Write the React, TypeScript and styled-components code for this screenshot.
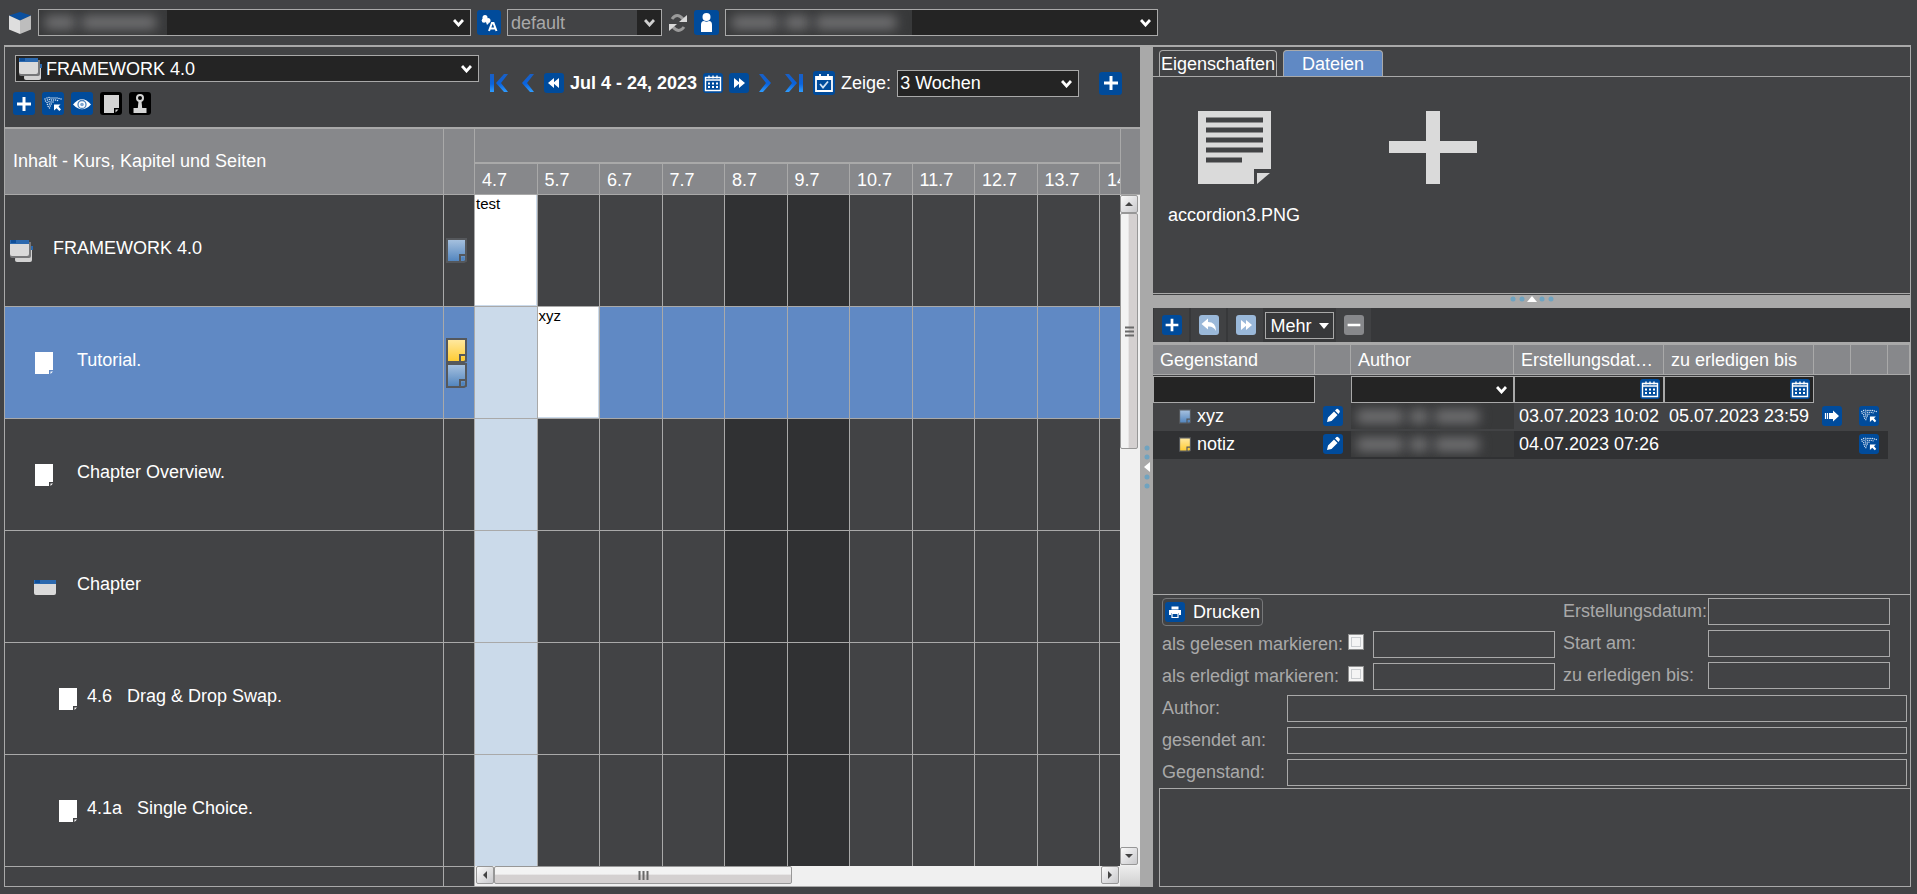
import React from "react";
import styled, { createGlobalStyle, css } from "styled-components";

const c = {
  bg: "#424345",
  dark: "#242424",
  line: "#a9a9a9",
  head: "#87888b",
  blue: "#004b9b",
  paleBlue: "#9ab8d9",
  select: "#6089c4",
  today: "#cbdaea",
  weekend: "#303133",
  text: "#ffffff",
  muted: "#a9a9a9",
};

const GlobalStyle = createGlobalStyle`
  * { box-sizing: border-box; }
  body {
    margin: 0;
    background: ${c.bg};
    color: ${c.text};
    font-family: "Liberation Sans", Arial, sans-serif;
    font-size: 18px;
    line-height: 20px;
  }
  button, input, select, textarea { font: inherit; color: inherit; margin: 0; }
  table { border-collapse: separate; border-spacing: 0; }
  th { font-weight: normal; text-align: left; }
  th, td { padding: 0; }
  svg { display: block; }
`;

/* ---------- icons ---------- */

type IconProps = { w?: number; h?: number };

const Svg = ({ w = 22, h = 22, box = "0 0 22 22", children }: IconProps & { box?: string; children: React.ReactNode }) => (
  <svg width={w} height={h} viewBox={box} aria-hidden="true">
    {children}
  </svg>
);

const CubeIcon = () => (
  <Svg w={24} h={24} box="0 0 24 24">
    <path d="M12 1 23 4.500 12 9.500 1 4.500z" fill="#0a4f9e" />
    <path d="M1 4.500 12 9.500V23L1 18.500z" fill="#dedede" />
    <path d="M23 4.500 12 9.500V23l11-4.500z" fill="#bdbdbd" />
  </Svg>
);

const PlusIcon = () => (
  <Svg>
    <path d="M11 4v14M4 11h14" stroke="#fff" strokeWidth="3" />
  </Svg>
);

const MinusIcon = () => (
  <Svg>
    <path d="M4 11h14" stroke="#fff" strokeWidth="3" />
  </Svg>
);

const netDots: [number, number][] = [
  [3, 6], [5, 5], [7, 4.5], [9, 5], [11, 5], [13, 5], [15, 5], [17, 5.5], [19, 6],
  [3.5, 8], [5.5, 7], [7.5, 6.5], [9.5, 7], [11.5, 7], [13.5, 7], [15.5, 7.5],
  [5, 9.5], [7, 8.8], [9, 9], [11, 9],
  [5.5, 11.5], [7.5, 11], [9.2, 11], [6.2, 13.5], [8.2, 13], [7.5, 15],
];

const NetIcon = () => (
  <Svg>
    {netDots.map(([x, y]) => (
      <circle key={`${x}-${y}`} cx={x} cy={y} r="0.75" fill="#d5e3f3" />
    ))}
    <path d="M12 11.500h6.500l-2 2 2.500 3-1.700 1.500-2.700-2.800-2.600 2.300z" fill="#fff" />
  </Svg>
);

const EyeIcon = () => (
  <Svg>
    <path d="M2 11.500Q11 1 20 11.500 11 21 2 11.500z" fill="#fff" />
    <circle cx="11" cy="11.500" r="4" fill="#fff" stroke="#4d83bd" strokeWidth="1.300" />
    <circle cx="11" cy="11.500" r="1.800" fill="#7ea5d0" />
  </Svg>
);

const NoteIcon = () => (
  <Svg>
    <path d="M4 2h15v13h-5v5H4z" fill="#d4d4d4" />
    <path d="M15.500 16.500h3l-3 3z" fill="#d4d4d4" />
  </Svg>
);

const StampIcon = () => (
  <Svg>
    <circle cx="11" cy="5" r="3" fill="none" stroke="#d4d4d4" strokeWidth="2" />
    <path d="M9.500 8h3l.7 7h4.300v5h-13v-5h4.300z" fill="#d4d4d4" />
  </Svg>
);

const TranslateIcon = () => (
  <Svg w={24} h={24} box="0 0 24 24">
    <circle cx="8" cy="6.500" r="2.500" fill="#fff" />
    <circle cx="7" cy="9.500" r="2.300" fill="#fff" />
    <circle cx="11" cy="9.500" r="2.500" fill="#fff" />
    <path d="M9 11l3 1-2 2z" fill="#fff" />
    <path d="M12 20 15 12h1.500l3 8M13 17.500h5" fill="none" stroke="#fff" strokeWidth="2" />
  </Svg>
);

const RefreshIcon = () => (
  <Svg w={20} h={22} box="1 0 20 22">
    <path d="M5 7q5-7 11 0" fill="none" stroke="#9a9a9a" strokeWidth="3" />
    <path d="M12 10h8V3z" fill="#d9d9d9" />
    <path d="M17 15q-5 7-11 0" fill="none" stroke="#9a9a9a" strokeWidth="3" />
    <path d="M10 12H2v7z" fill="#d9d9d9" />
  </Svg>
);

const UserIcon = () => (
  <Svg w={25} h={25} box="0 0 25 25">
    <circle cx="12.500" cy="7" r="4" fill="#fff" />
    <path d="M7 22v-7q0-4 3-4 2.500 1.500 5 0 3 0 3 4v7z" fill="#fff" />
  </Svg>
);

const ChevGradient = ({ id }: { id: string }) => (
  <linearGradient id={id} x1="0" y1="0" x2="0" y2="1">
    <stop offset="0" stopColor="#1a5fc4" />
    <stop offset="0.55" stopColor="#0a63dd" />
    <stop offset="1" stopColor="#2f9dff" />
  </linearGradient>
);

const FirstIcon = () => (
  <Svg w={18} h={20} box="0 0 18 20">
    <ChevGradient id="first" />
    <path d="M0 1h4v18H0zM14 1h4l-7 9 7 9h-4L6 10z" fill="url(#first)" />
  </Svg>
);
const PrevIcon = () => (
  <Svg w={12} h={20} box="0 0 12 20">
    <ChevGradient id="prev" />
    <path d="M8 1h4L5 10l7 9H8L0 10z" fill="url(#prev)" />
  </Svg>
);
const NextIcon = () => (
  <Svg w={12} h={20} box="0 0 12 20">
    <ChevGradient id="next" />
    <path d="M4 1H0l7 9-7 9h4l8-9z" fill="url(#next)" />
  </Svg>
);
const LastIcon = () => (
  <Svg w={18} h={20} box="0 0 18 20">
    <ChevGradient id="last" />
    <path d="M14 1h4v18h-4zM4 1H0l7 9-7 9h4l8-9z" fill="url(#last)" />
  </Svg>
);

const RewindIcon = () => (
  <Svg w={20} h={20} box="0 0 20 20">
    <path d="M10 5v10l-6-5zM15 5v10l-6-5z" fill="#fff" />
  </Svg>
);
const ForwardIcon = () => (
  <Svg w={20} h={20} box="0 0 20 20">
    <path d="M5 5v10l6-5zM10 5v10l6-5z" fill="#fff" />
  </Svg>
);
const CalendarIcon = () => (
  <Svg w={20} h={20} box="0 0 20 20">
    <path d="M2.500 4.500h15v13h-15zM2 7h16M6 2.500v3M10 2.500v3M14 2.500v3" fill="none" stroke="#fff" strokeWidth="1.400" />
    <path d="M5 10.500h10M5 14h10" stroke="#fff" strokeWidth="2" strokeDasharray="2 2" />
  </Svg>
);
const CalendarCheckIcon = () => (
  <Svg w={22} h={24} box="0 0 22 24">
    <path d="M3 6h16v14H3zM3 8h16M7 3v4M15 3v4" fill="none" stroke="#fff" strokeWidth="1.800" />
    <path d="M7 13l3 3.500 5-6" fill="none" stroke="#cfe0f2" strokeWidth="1.800" />
  </Svg>
);
const UndoIcon = () => (
  <Svg w={20} h={20} box="0 0 20 20">
    <path d="M2.500 9 9 3.500V7q8 0 8 9-2.500-5-8-4.500v3z" fill="#fff" />
  </Svg>
);
const PencilIcon = () => (
  <Svg w={20} h={20} box="0 0 20 20">
    <path d="M4 16l1-4.500L11 5.500 14.500 9l-6 6zM12 4.500 13.500 3q1-.5 2 .5l1 1q.8 1 0 2L15.500 8z" fill="#fff" />
  </Svg>
);
const SendIcon = () => (
  <Svg w={20} h={20} box="0 0 20 20">
    <path d="M3.500 7v6M5.500 7v6" stroke="#fff" strokeWidth="1.200" />
    <path d="M7 7h4V4.500L17 10l-6 5.500V13H7z" fill="#fff" />
  </Svg>
);
const PrintIcon = () => (
  <Svg w={20} h={20} box="0 0 20 20">
    <path d="M6.500 4.500h7v3h-7zM4 8h12v5h-2v-2H6v2H4z" fill="#fff" />
    <path d="M7 11.500h6v4H7z" fill="none" stroke="#fff" strokeWidth="1.200" />
  </Svg>
);

const CourseIcon = () => (
  <Svg w={24} h={24} box="0 0 24 24">
    <path d="M6 9h16v12q0 2-2 2H7q-2 0-2-2z" fill="#d2d2d2" />
    <path d="M20 7h3v4h-3z" fill="#2c69ae" />
    <path d="M0 3h21v14q0 2-2 2H2q-2 0-2-2z" fill="#77787a" />
    <path d="M0 3h19v12q0 2-2 2H2q-2 0-2-2z" fill="#dadada" />
    <path d="M0 1h19v4H0z" fill="#2c69ae" />
    <path d="M1 1h5v3H1z" fill="#0f4f99" />
  </Svg>
);
const ChapterIcon = () => (
  <Svg w={22} h={24} box="0 0 22 24">
    <path d="M0 8h22v10q0 2-2 2H2q-2 0-2-2z" fill="#dadada" />
    <path d="M0 5h22v4H0z" fill="#2c69ae" />
    <path d="M1 5h5v3H1z" fill="#0f4f99" />
  </Svg>
);
const PageIcon = () => (
  <Svg w={20} h={24} box="0 0 20 24">
    <path d="M1 1h18v18h-4v4H1z" fill="#fff" />
    <path d="M16.500 20.500H19L16.500 23z" fill="#fff" />
  </Svg>
);

const StickyIcon = ({ tone, w = 21, h = 25 }: IconProps & { tone: "blue" | "yellow" }) => {
  const [top, bottom] = tone === "blue" ? ["#a9c3e0", "#4f83bd"] : ["#ffe9a3", "#ffcb2f"];
  const id = `sticky-${tone}`;
  return (
    <Svg w={w} h={h} box="0 0 21 25">
      <linearGradient id={id} x1="0" y1="0" x2="0" y2="1">
        <stop offset="0" stopColor={top} />
        <stop offset="1" stopColor={bottom} />
      </linearGradient>
      <path d="M1 1h19v22l-2 1H1z" fill={`url(#${id})`} stroke="#55585c" strokeWidth="2" />
      <path d="M20 17h-6v7" fill="none" stroke="#55585c" strokeWidth="2" />
      <circle cx="17" cy="20.500" r="1.500" fill={bottom} />
    </Svg>
  );
};

const DocumentIcon = () => (
  <Svg w={73} h={73} box="0 0 73 73">
    <path d="M0 0h73v58H56v15H0z" fill="#dadada" />
    <path d="M59 62h13L59 73z" fill="#dadada" />
    <path d="M8 9h57M8 19h57M8 29h57M8 39h57M8 49h36" stroke={c.bg} strokeWidth="5" />
  </Svg>
);
const BigPlusIcon = () => (
  <Svg w={88} h={73} box="0 0 88 73">
    <path d="M37 0h14v30h37v12H51v31H37V42H0V30h37z" fill="#dadada" />
  </Svg>
);

/* ---------- shared controls ---------- */

const IconButton = styled.button<{ $w?: number; $h?: number; $tone?: string }>`
  flex: none;
  display: flex;
  align-items: center;
  justify-content: center;
  width: ${(p) => p.$w ?? 20}px;
  height: ${(p) => p.$h ?? 20}px;
  padding: 0;
  border: 0;
  border-radius: 3px;
  background: ${(p) => p.$tone ?? c.blue};
  overflow: hidden;
`;

const ChevronButton = styled.button`
  flex: none;
  margin: 0 4px;
  padding: 0;
  border: 0;
  background: none;
`;

const SelectBox = styled.div<{ $w?: number }>`
  position: relative;
  flex: none;
  width: ${(p) => (p.$w ? `${p.$w}px` : "100%")};
  height: 27px;
`;

const NativeSelect = styled.select<{ $pad?: number; $muted?: boolean }>`
  appearance: none;
  display: block;
  width: 100%;
  height: 100%;
  padding: 0 24px 0 ${(p) => p.$pad ?? 2}px;
  border: 1px solid ${c.line};
  border-radius: 0;
  background: ${(p) => (p.$muted ? `linear-gradient(${c.dark}, ${c.dark}) right / 24px 100% no-repeat ${c.bg}` : c.dark)};
  color: ${(p) => (p.$muted ? c.muted : c.text)};
  line-height: 20px;
`;

const SelectArrow = styled.span`
  position: absolute;
  right: 7px;
  top: 10px;
  pointer-events: none;
`;

const SelectLead = styled.span`
  position: absolute;
  left: 4px;
  top: 2px;
  pointer-events: none;
`;

const Smudge = styled.span<{ $w: number; $h: number }>`
  display: flex;
  align-items: center;
  gap: 7px;
  width: ${(p) => p.$w}px;
  height: ${(p) => p.$h}px;
  padding: 0 6px;
  background: #38393a;
  overflow: hidden;
`;

const SmudgeWord = styled.i<{ $w: number }>`
  width: ${(p) => p.$w}px;
  height: 13px;
  background: #737375;
  filter: blur(6px);
`;

const SelectCover = styled.span`
  position: absolute;
  left: 1px;
  top: 1px;
  pointer-events: none;
`;

type DropProps = {
  label: string;
  value: string;
  w?: number;
  pad?: number;
  muted?: boolean;
  lead?: React.ReactNode;
  cover?: React.ReactNode;
  id?: string;
};

const Drop = ({ label, value, w, pad, muted, lead, cover, id }: DropProps) => (
  <SelectBox $w={w}>
    <NativeSelect aria-label={label} id={id} $pad={pad} $muted={muted} defaultValue={value}>
      <option value={value}>{value}</option>
    </NativeSelect>
    {lead && <SelectLead>{lead}</SelectLead>}
    {cover && <SelectCover>{cover}</SelectCover>}
    <SelectArrow>
      <Svg w={11} h={8} box="0 0 11 8">
        <path d="M1 1l4.500 5L10 1" fill="none" stroke={muted ? "#cfcfcf" : "#fff"} strokeWidth="2.800" />
      </Svg>
    </SelectArrow>
  </SelectBox>
);

/* ---------- page frame ---------- */

const Shell = styled.div`
  display: flex;
  flex-direction: column;
  height: 100vh;
  min-height: 700px;
  padding: 0 6px 7px 4px;
`;

const TopBar = styled.header`
  flex: none;
  display: flex;
  align-items: center;
  gap: 6px;
  height: 45px;
  padding-left: 4px;
`;

const Workspace = styled.main`
  flex: 1;
  min-height: 0;
  display: grid;
  grid-template-columns: minmax(0, 3fr) 12px minmax(0, 2fr);
  grid-template-rows: minmax(0, 1fr);
  border-top: 2px solid ${c.line};
`;

const Planner = styled.section`
  display: flex;
  flex-direction: column;
  min-height: 0;
  border: 1px solid ${c.line};
  border-top: 0;
`;

const PlannerTools = styled.div`
  flex: none;
  display: flex;
  height: 80px;
  padding: 8px 10px 0;
`;

const CourseTools = styled.div`
  flex: none;
  width: 464px;
`;

const ButtonRow = styled.div`
  display: flex;
  gap: 7px;
  margin: 10px 0 0 -2px;
`;

const DateNav = styled.nav`
  display: flex;
  align-items: center;
  gap: 6px;
  height: 56px;
  margin-left: 7px;
  white-space: nowrap;
`;

const AddSlot = styled.div`
  margin-left: 14px;
`;

const Board = styled.div`
  flex: 1;
  min-height: 0;
  display: flex;
  border-top: 2px solid ${c.line};
`;

const Tree = styled.div`
  flex: none;
  width: 470px;
  overflow: hidden;
`;

const TreeTable = styled.table`
  width: 100%;
  table-layout: fixed;
`;

const NoteCol = styled.col`
  width: 31px;
`;

const TreeHead = styled.th`
  height: 66px;
  padding: 0 0 2px 8px;
  background: ${c.head};
  border-right: 1px solid ${c.line};
  border-bottom: 1px solid ${c.line};
`;

const rowHeight = css`
  height: 112px;
  border-right: 1px solid ${c.line};
  border-bottom: 1px solid ${c.line};
`;

const TreeCell = styled.td<{ $on?: boolean; $level?: number }>`
  ${rowHeight}
  padding-left: ${(p) => 5 + 24 * (p.$level ?? 0)}px;
  background: ${(p) => (p.$on ? c.select : "transparent")};
`;

const TreeItem = styled.div`
  display: flex;
  align-items: center;
`;

const TreeIcon = styled.span<{ $w: number }>`
  flex: none;
  width: ${(p) => p.$w}px;
`;

const TreeText = styled.span`
  padding-bottom: 6px;
  white-space: pre;
`;

const NoteCell = styled(TreeCell)`
  padding-left: 2px;
`;

const Timeline = styled.div`
  flex: 1;
  min-width: 0;
  display: flex;
  flex-direction: column;
`;

const DaysView = styled.div`
  flex: 1;
  min-height: 0;
  overflow: hidden;
`;

const DaysTable = styled.table`
  width: 100%;
  table-layout: fixed;
`;

const LastDayCol = styled.col`
  width: 20px;
`;

const MonthHead = styled.th`
  height: 35px;
  background: ${c.head};
  border-bottom: 2px solid ${c.line};
`;

const DayHead = styled.th`
  height: 31px;
  padding: 2px 0 0 7px;
  background: ${c.head};
  border-right: 1px solid ${c.line};
  border-bottom: 1px solid ${c.line};
  overflow: hidden;
  white-space: nowrap;
  &:last-child { border-right: 0; }
`;

const DayCell = styled.td<{ $bg: string }>`
  ${rowHeight}
  background: ${(p) => p.$bg};
  vertical-align: top;
  &:last-child { border-right: 0; }
`;

const Event = styled.div`
  height: 111px;
  border: 1px solid ${c.today};
  border-width: 0 1px 1px 0;
  background: #fff;
  color: #000;
  font-size: 15px;
  line-height: 18px;
  padding-left: 1px;
`;

/* ---------- scroll bars ---------- */

const bevel = css`
  border: 1px solid #979797;
  border-radius: 2px;
  display: flex;
  align-items: center;
  justify-content: center;
`;

const HBar = styled.div`
  flex: none;
  display: flex;
  height: 20px;
  padding: 0 1px 2px;
  background: #f0f0f0;
`;

const HThumb = styled.div`
  ${bevel}
  width: 298px;
  background: linear-gradient(#f3f3f3 0 45%, #d4d0d0 50% 100%);
`;

const VRail = styled.div`
  flex: none;
  display: flex;
  flex-direction: column;
  width: 20px;
  background: #f0f0f0;
`;

const VCorner = styled.div`
  flex: none;
  height: 66px;
  background: ${c.head};
  border: 1px solid ${c.line};
  border-width: 0 0 1px 1px;
`;

const VBar = styled.div`
  flex: 1;
  display: flex;
  flex-direction: column;
  padding: 0 2px 1px 0;
`;

const VThumb = styled.div`
  ${bevel}
  height: 236px;
  background: linear-gradient(90deg, #f3f3f3 0 45%, #d4d0d0 50% 100%);
`;

const VEnd = styled.div`
  flex: none;
  height: 20px;
  background: linear-gradient(#ededed, #cfcfcf);
`;

const Arrow = styled.button`
  ${bevel}
  flex: none;
  width: 18px;
  height: 18px;
  padding: 0;
  background: linear-gradient(135deg, #fafafa, #c9c9cc);
`;

const Filler = styled.span`
  flex: 1;
`;

const Grip = ({ vertical }: { vertical?: boolean }) => (
  <Svg w={11} h={11} box="0 0 11 11">
    <path
      d={vertical ? "M1 1.500h9M1 5.500h9M1 9.500h9" : "M1.500 1v9M5.500 1v9M9.500 1v9"}
      stroke="#6a6a6a"
      strokeWidth="2"
    />
  </Svg>
);

const Tip = ({ d }: { d: string }) => (
  <Svg w={8} h={8} box="0 0 8 8">
    <path d={d} fill="#444" />
  </Svg>
);

/* ---------- splitters ---------- */

const Splitter = styled.div<{ $row?: boolean }>`
  flex: none;
  display: flex;
  align-items: ${(p) => (p.$row ? "flex-start" : "center")};
  justify-content: center;
  background: ${c.line};
  height: ${(p) => (p.$row ? "13px" : "auto")};
`;

const Handle = ({ row }: { row?: boolean }) => (
  <Svg w={row ? 44 : 8} h={row ? 8 : 44} box={row ? "0 0 44 8" : "0 0 8 44"}>
    {[3, 12, 32, 41].map((n) => (
      <circle key={n} cx={row ? n : 4} cy={row ? 4 : n} r="2.500" fill="#6fa3c0" />
    ))}
    <path d={row ? "M17 7l5-6 5 6z" : "M7 17l-6 5 6 5z"} fill="#fff" />
  </Svg>
);

/* ---------- right side ---------- */

const Side = styled.section`
  display: flex;
  flex-direction: column;
  min-height: 0;
`;

const FilesPane = styled.div`
  flex: none;
  display: flex;
  flex-direction: column;
  height: 248px;
  border-right: 1px solid ${c.line};
`;

const Tabs = styled.div`
  display: flex;
  align-items: flex-end;
  gap: 6px;
  height: 30px;
  padding: 3px 6px 0;
  border-bottom: 1px solid ${c.line};
`;

const Tab = styled.button<{ $on?: boolean; $w: number }>`
  width: ${(p) => p.$w}px;
  height: 26px;
  padding: 0;
  border: 1px solid ${c.line};
  border-bottom: 0;
  border-radius: 4px 4px 0 0;
  background: ${(p) => (p.$on ? c.select : "transparent")};
  white-space: nowrap;
`;

const Files = styled.div`
  flex: 1;
  display: flex;
  align-items: flex-start;
  gap: 59px;
  margin-bottom: 1px;
  padding: 34px 11px;
  border-bottom: 1px solid ${c.line};
`;

const FileTile = styled.button`
  display: flex;
  flex-direction: column;
  align-items: center;
  gap: 21px;
  width: 140px;
  padding: 0;
  border: 0;
  background: none;
`;

const ListPane = styled.div`
  flex: none;
  height: 287px;
  border-right: 1px solid ${c.line};
  border-bottom: 1px solid ${c.line};
`;

const ListTools = styled.div`
  display: flex;
  gap: 2px;
  height: 37px;
  padding-left: 1px;
  background: #37383a;
  border-bottom: 3px solid ${c.line};
`;

const ToolSlot = styled.div`
  display: flex;
  align-items: center;
  justify-content: center;
  width: 35px;
  background: #404143;
`;

const MoreButton = styled.button`
  display: flex;
  align-items: center;
  justify-content: center;
  gap: 7px;
  width: 69px;
  height: 27px;
  margin-top: 4px;
  padding: 0;
  border: 1px solid ${c.line};
  background: transparent;
`;

const ListTable = styled.table`
  width: 100%;
  table-layout: fixed;
`;

const Col = styled.col<{ $w: number }>`
  width: ${(p) => p.$w}px;
`;

const ListHead = styled.th`
  height: 30px;
  padding-left: 7px;
  background: ${c.head};
  border-right: 1px solid ${c.line};
  border-bottom: 1px solid ${c.line};
  overflow: hidden;
  white-space: nowrap;
`;

const FilterCell = styled.td`
  height: 28px;
`;

const FilterField = styled.div`
  display: flex;
  align-items: center;
  height: 27px;
  padding-right: 3px;
  border: 1px solid ${c.line};
  background: ${c.dark};
`;

const FilterInput = styled.input`
  flex: 1;
  min-width: 0;
  border: 0;
  padding: 0 4px;
  background: transparent;
`;

const ListRow = styled.tr<{ $alt?: boolean }>`
  td:not(:last-child) {
    background: ${(p) => (p.$alt ? "#303133" : "transparent")};
  }
`;

const ListCell = styled.td<{ $pad?: number }>`
  height: 28px;
  padding: 0 0 2px ${(p) => p.$pad ?? 0}px;
  white-space: nowrap;
  overflow: hidden;
`;

const Subject = styled.span`
  display: flex;
  align-items: center;
  gap: 6px;
`;

const Form = styled.form`
  flex: 1;
  min-height: 0;
  display: flex;
  flex-direction: column;
  gap: 5px;
  padding-top: 3px;
  border-right: 1px solid ${c.line};
  color: ${c.muted};
`;

const FormTop = styled.div`
  display: flex;
  gap: 8px;
  padding-left: 9px;
`;

const FormColumn = styled.div`
  display: flex;
  flex-direction: column;
  gap: 5px;
`;

const FormLine = styled.div`
  display: flex;
  align-items: center;
`;

const WideLine = styled(FormLine)`
  padding: 0 3px 0 9px;
`;

const FieldLabel = styled.label<{ $w: number }>`
  flex: none;
  width: ${(p) => p.$w}px;
  padding-bottom: 2px;
  white-space: nowrap;
`;

const Field = styled.input<{ $w?: number }>`
  ${(p) => (p.$w ? `width: ${p.$w}px;` : "flex: 1; min-width: 0;")}
  height: 27px;
  padding: 0 4px;
  border: 1px solid ${c.line};
  background: transparent;
`;

const Tick = styled.input`
  appearance: none;
  flex: none;
  align-self: flex-start;
  width: 16px;
  height: 16px;
  margin: 3px 9px 0 0;
  border: 1px solid #8e8f8f;
  background: #f4f4f4;
  box-shadow: inset 0 0 0 2px #f4f4f4, inset 0 0 0 3px #c9cccf;
`;

const PrintButton = styled.button`
  display: flex;
  align-items: center;
  gap: 8px;
  height: 28px;
  width: 101px;
  padding: 0 2px;
  border: 1px solid #77787a;
  border-radius: 4px;
  background: transparent;
  color: ${c.text};
`;

const PrintBadge = styled.span`
  border-radius: 3px;
  background: ${c.blue};
`;

const Body = styled.textarea`
  flex: 1;
  min-height: 40px;
  margin: -3px 0 0 6px;
  border: 1px solid ${c.line};
  border-right: 0;
  background: transparent;
  resize: none;
`;

/* ---------- data ---------- */

type Item = { text: string; level: number; slot: number; icon: React.ReactNode; notes?: ("blue" | "yellow")[]; on?: boolean };

const items: Item[] = [
  { text: "FRAMEWORK 4.0", level: 0, slot: 43, icon: <CourseIcon />, notes: ["blue"] },
  { text: "Tutorial.", level: 1, slot: 43, icon: <PageIcon />, notes: ["yellow", "blue"], on: true },
  { text: "Chapter Overview.", level: 1, slot: 43, icon: <PageIcon /> },
  { text: "Chapter", level: 1, slot: 43, icon: <ChapterIcon /> },
  { text: "4.6   Drag & Drop Swap.", level: 2, slot: 29, icon: <PageIcon /> },
  { text: "4.1a   Single Choice.", level: 2, slot: 29, icon: <PageIcon /> },
  { text: "", level: 2, slot: 29, icon: null },
];

const days = ["4.7", "5.7", "6.7", "7.7", "8.7", "9.7", "10.7", "11.7", "12.7", "13.7", "14.7"];

const events: Record<string, string> = { "0-0": "test", "1-1": "xyz" };

const dayColour = (row: number, day: number) => {
  if (day === 0) return c.today;
  if (items[row].on) return c.select;
  return day === 4 || day === 5 ? c.weekend : "transparent";
};

const notes = [
  { tone: "blue" as const, name: "xyz", made: "03.07.2023 10:02", due: "05.07.2023 23:59" },
  { tone: "yellow" as const, name: "notiz", made: "04.07.2023 07:26", due: "" },
];

/* ---------- page ---------- */

export default function App() {
  return (
    <>
      <GlobalStyle />
      <Shell>
        <TopBar>
          <CubeIcon />
          <Drop
            label="Projekt"
            value=""
            w={433}
            cover={
              <Smudge $w={128} $h={25}>
                <SmudgeWord $w={30} />
                <SmudgeWord $w={74} />
              </Smudge>
            }
          />
          <IconButton $w={24} $h={25} aria-label="Sprache">
            <TranslateIcon />
          </IconButton>
          <Drop label="Sprachauswahl" value="default" w={155} pad={3} muted />
          <RefreshIcon />
          <IconButton $w={25} $h={25} aria-label="Benutzer">
            <UserIcon />
          </IconButton>
          <Drop
            label="Benutzerauswahl"
            value=""
            w={433}
            cover={
              <Smudge $w={186} $h={25}>
                <SmudgeWord $w={46} />
                <SmudgeWord $w={24} />
                <SmudgeWord $w={80} />
              </Smudge>
            }
          />
        </TopBar>

        <Workspace>
          <Planner>
            <PlannerTools>
              <CourseTools>
                <Drop label="Kurs" value="FRAMEWORK 4.0" pad={30} lead={<CourseIcon />} />
                <ButtonRow>
                  <IconButton $w={22} $h={23} aria-label="Neu"><PlusIcon /></IconButton>
                  <IconButton $w={22} $h={23} aria-label="Netz"><NetIcon /></IconButton>
                  <IconButton $w={22} $h={23} aria-label="Ansicht"><EyeIcon /></IconButton>
                  <IconButton $w={22} $h={23} $tone="#000" aria-label="Notiz"><NoteIcon /></IconButton>
                  <IconButton $w={22} $h={23} $tone="#000" aria-label="Stempel"><StampIcon /></IconButton>
                </ButtonRow>
              </CourseTools>
              <DateNav>
                <ChevronButton aria-label="Anfang"><FirstIcon /></ChevronButton>
                <ChevronButton aria-label="Zurück"><PrevIcon /></ChevronButton>
                <IconButton aria-label="Schnell zurück"><RewindIcon /></IconButton>
                <b>Jul 4 - 24, 2023</b>
                <IconButton aria-label="Kalender"><CalendarIcon /></IconButton>
                <IconButton aria-label="Schnell vor"><ForwardIcon /></IconButton>
                <ChevronButton aria-label="Vor"><NextIcon /></ChevronButton>
                <ChevronButton aria-label="Ende"><LastIcon /></ChevronButton>
                <IconButton $w={22} $h={24} aria-label="Heute"><CalendarCheckIcon /></IconButton>
                <label htmlFor="span">Zeige:</label>
                <Drop id="span" label="Zeige" value="3 Wochen" w={182} />
                <AddSlot>
                  <IconButton $w={23} $h={23} aria-label="Hinzufügen"><PlusIcon /></IconButton>
                </AddSlot>
              </DateNav>
            </PlannerTools>

            <Board>
              <Tree>
                <TreeTable>
                  <colgroup>
                    <col />
                    <NoteCol />
                  </colgroup>
                  <thead>
                    <tr>
                      <TreeHead>Inhalt - Kurs, Kapitel und Seiten</TreeHead>
                      <TreeHead />
                    </tr>
                  </thead>
                  <tbody>
                    {items.map((it, i) => (
                      <tr key={i}>
                        <TreeCell $on={it.on} $level={it.level}>
                          <TreeItem>
                            <TreeIcon $w={it.slot}>{it.icon}</TreeIcon>
                            <TreeText>{it.text}</TreeText>
                          </TreeItem>
                        </TreeCell>
                        <NoteCell $on={it.on}>
                          {it.notes?.map((tone) => <StickyIcon key={tone} tone={tone} />)}
                        </NoteCell>
                      </tr>
                    ))}
                  </tbody>
                </TreeTable>
              </Tree>

              <Timeline>
                <DaysView>
                  <DaysTable>
                    <colgroup>
                      {days.slice(0, -1).map((d) => <col key={d} />)}
                      <LastDayCol />
                    </colgroup>
                    <thead>
                      <tr>
                        <MonthHead colSpan={days.length} />
                      </tr>
                      <tr>
                        {days.map((d) => <DayHead key={d}>{d}</DayHead>)}
                      </tr>
                    </thead>
                    <tbody>
                      {items.map((_, r) => (
                        <tr key={r}>
                          {days.map((d, k) => (
                            <DayCell key={d} $bg={dayColour(r, k)}>
                              {events[`${r}-${k}`] && <Event>{events[`${r}-${k}`]}</Event>}
                            </DayCell>
                          ))}
                        </tr>
                      ))}
                    </tbody>
                  </DaysTable>
                </DaysView>
                <HBar>
                  <Arrow aria-label="Nach links"><Tip d="M6 0v8L2 4z" /></Arrow>
                  <HThumb><Grip /></HThumb>
                  <Filler />
                  <Arrow aria-label="Nach rechts"><Tip d="M2 0v8l4-4z" /></Arrow>
                </HBar>
              </Timeline>

              <VRail>
                <VCorner />
                <VBar>
                  <Arrow aria-label="Nach oben"><Tip d="M0 6h8L4 2z" /></Arrow>
                  <VThumb><Grip vertical /></VThumb>
                  <Filler />
                  <Arrow aria-label="Nach unten"><Tip d="M0 2h8L4 6z" /></Arrow>
                </VBar>
                <VEnd />
              </VRail>
            </Board>
          </Planner>

          <Splitter><Handle /></Splitter>

          <Side>
            <FilesPane>
              <Tabs role="tablist">
                <Tab role="tab" $w={118}>Eigenschaften</Tab>
                <Tab role="tab" aria-selected $on $w={100}>Dateien</Tab>
              </Tabs>
              <Files>
                <FileTile>
                  <DocumentIcon />
                  accordion3.PNG
                </FileTile>
                <FileTile aria-label="Datei hinzufügen">
                  <BigPlusIcon />
                </FileTile>
              </Files>
            </FilesPane>

            <Splitter $row><Handle row /></Splitter>

            <ListPane>
              <ListTools>
                <ToolSlot><IconButton aria-label="Neu"><PlusIcon /></IconButton></ToolSlot>
                <ToolSlot><IconButton $tone={c.paleBlue} aria-label="Antworten"><UndoIcon /></IconButton></ToolSlot>
                <ToolSlot><IconButton $tone={c.paleBlue} aria-label="Weiterleiten"><ForwardIcon /></IconButton></ToolSlot>
                <MoreButton>
                  Mehr
                  <Svg w={10} h={6} box="0 0 10 6"><path d="M0 0h10L5 6z" fill="#fff" /></Svg>
                </MoreButton>
                <ToolSlot><IconButton $tone={c.head} aria-label="Entfernen"><MinusIcon /></IconButton></ToolSlot>
              </ListTools>
              <ListTable>
                <colgroup>
                  <col />
                  <Col $w={36} />
                  <Col $w={163} />
                  <Col $w={150} />
                  <Col $w={150} />
                  <Col $w={37} />
                  <Col $w={37} />
                  <Col $w={22} />
                </colgroup>
                <thead>
                  <tr>
                    <ListHead>Gegenstand</ListHead>
                    <ListHead />
                    <ListHead>Author</ListHead>
                    <ListHead>Erstellungsdat…</ListHead>
                    <ListHead>zu erledigen bis</ListHead>
                    <ListHead />
                    <ListHead />
                    <ListHead />
                  </tr>
                </thead>
                <tbody>
                  <tr>
                    <FilterCell><FilterField><FilterInput aria-label="Gegenstand filtern" /></FilterField></FilterCell>
                    <FilterCell />
                    <FilterCell><Drop label="Author filtern" value="" /></FilterCell>
                    <FilterCell>
                      <FilterField>
                        <FilterInput aria-label="Erstellungsdatum filtern" />
                        <IconButton aria-label="Datum wählen"><CalendarIcon /></IconButton>
                      </FilterField>
                    </FilterCell>
                    <FilterCell>
                      <FilterField>
                        <FilterInput aria-label="Zu erledigen bis filtern" />
                        <IconButton aria-label="Datum wählen"><CalendarIcon /></IconButton>
                      </FilterField>
                    </FilterCell>
                    <FilterCell colSpan={3} />
                  </tr>
                  {notes.map((n, i) => (
                    <ListRow key={n.name} $alt={i % 2 === 1}>
                      <ListCell $pad={26}>
                        <Subject>
                          <StickyIcon tone={n.tone} w={12} h={15} />
                          {n.name}
                        </Subject>
                      </ListCell>
                      <ListCell $pad={8}><IconButton aria-label="Bearbeiten"><PencilIcon /></IconButton></ListCell>
                      <ListCell>
                        <Smudge $w={163} $h={26}>
                          <SmudgeWord $w={46} />
                          <SmudgeWord $w={18} />
                          <SmudgeWord $w={44} />
                        </Smudge>
                      </ListCell>
                      <ListCell $pad={5}>{n.made}</ListCell>
                      <ListCell $pad={5}>{n.due}</ListCell>
                      <ListCell $pad={8}>
                        {n.due && <IconButton aria-label="Senden"><SendIcon /></IconButton>}
                      </ListCell>
                      <ListCell $pad={8}><IconButton aria-label="Netz"><NetIcon /></IconButton></ListCell>
                      <ListCell />
                    </ListRow>
                  ))}
                </tbody>
              </ListTable>
            </ListPane>

            <Form>
              <FormTop>
                <FormColumn>
                  <PrintButton type="button">
                    <PrintBadge><PrintIcon /></PrintBadge>
                    Drucken
                  </PrintButton>
                  <FormLine>
                    <FieldLabel $w={186} htmlFor="read">als gelesen markieren:</FieldLabel>
                    <Tick id="read" type="checkbox" />
                    <Field $w={182} aria-label="gelesen am" />
                  </FormLine>
                  <FormLine>
                    <FieldLabel $w={186} htmlFor="done">als erledigt markieren:</FieldLabel>
                    <Tick id="done" type="checkbox" />
                    <Field $w={182} aria-label="erledigt am" />
                  </FormLine>
                </FormColumn>
                <FormColumn>
                  <FormLine>
                    <FieldLabel $w={145} htmlFor="created">Erstellungsdatum:</FieldLabel>
                    <Field $w={182} id="created" />
                  </FormLine>
                  <FormLine>
                    <FieldLabel $w={145} htmlFor="start">Start am:</FieldLabel>
                    <Field $w={182} id="start" />
                  </FormLine>
                  <FormLine>
                    <FieldLabel $w={145} htmlFor="due">zu erledigen bis:</FieldLabel>
                    <Field $w={182} id="due" />
                  </FormLine>
                </FormColumn>
              </FormTop>
              <WideLine>
                <FieldLabel $w={125} htmlFor="author">Author:</FieldLabel>
                <Field id="author" />
              </WideLine>
              <WideLine>
                <FieldLabel $w={125} htmlFor="sent">gesendet an:</FieldLabel>
                <Field id="sent" />
              </WideLine>
              <WideLine>
                <FieldLabel $w={125} htmlFor="subject">Gegenstand:</FieldLabel>
                <Field id="subject" />
              </WideLine>
              <Body aria-label="Nachricht" />
            </Form>
          </Side>
        </Workspace>
      </Shell>
    </>
  );
}
